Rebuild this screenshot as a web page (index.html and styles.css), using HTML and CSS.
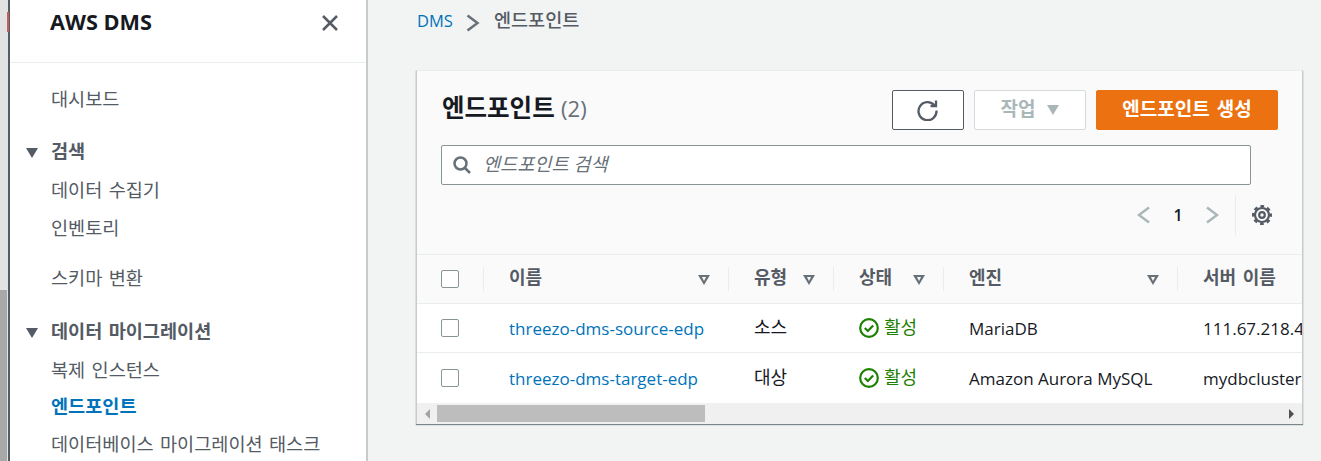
FILE: index.html
```html
<!DOCTYPE html>
<html lang="ko">
<head>
    <meta charset="UTF-8">
    <title>엔드포인트 - AWS DMS</title>
    <link rel="stylesheet" href="styles.css">
</head>
<body>
    <div class="edge"><div class="edge-mark"></div><div class="edge-thumb"></div></div>

    <nav class="side">
        <div class="side-head">
            <h2>AWS DMS</h2>
            <svg class="close" width="18" height="18" viewBox="0 0 18 18"><path d="M2 2l14 14M16 2L2 16"/></svg>
        </div>
        <div class="side-body">
            <a class="nav-link first">대시보드</a>
            <div class="nav-group"><span class="caret"></span>검색</div>
            <a class="nav-link">데이터 수집기</a>
            <a class="nav-link">인벤토리</a>
            <a class="nav-link solo">스키마 변환</a>
            <div class="nav-group"><span class="caret"></span>데이터 마이그레이션</div>
            <a class="nav-link">복제 인스턴스</a>
            <a class="nav-link active">엔드포인트</a>
            <a class="nav-link">데이터베이스 마이그레이션 태스크</a>
        </div>
    </nav>

    <main class="content">
        <div class="crumbs">
            <a>DMS</a>
            <svg width="14" height="18" viewBox="0 0 14 18"><path d="M1.500 1.500l10 7.500-10 7.500"/></svg>
            <span>엔드포인트</span>
        </div>

        <section class="panel">
            <div class="panel-head">
                <div class="title-row">
                    <h1>엔드포인트 <span class="count">(2)</span></h1>
                    <div class="actions">
                        <button class="btn refresh">
                            <svg width="22" height="22" viewBox="0 0 22 22"><path d="M17.500 6.500A9 9 0 1 0 19.500 11.500"/><path d="M19 1.500v5.500h-5.500"/></svg>
                        </button>
                        <button class="btn disabled"><span class="btn-text">작업</span><span class="btn-caret"></span></button>
                        <button class="btn primary"><span class="btn-text">엔드포인트 생성</span></button>
                    </div>
                </div>
                <div class="search">
                    <svg width="20" height="20" viewBox="0 0 20 20"><circle cx="8.500" cy="8.500" r="6"/><path d="M13 13l5 5"/></svg>
                    <span>엔드포인트 검색</span>
                </div>
                <div class="pager">
                    <svg class="pg" width="14" height="18" viewBox="0 0 14 18"><path d="M12 1.500L2 9l10 7.500"/></svg>
                    <b>1</b>
                    <svg class="pg" width="14" height="18" viewBox="0 0 14 18"><path d="M2 1.500L12 9 2 16.500"/></svg>
                    <div class="pager-sep">
                        <svg class="gear" width="22" height="22" viewBox="0 0 22 22">
                            <circle cx="11" cy="11" r="2.800"/>
                            <circle cx="11" cy="11" r="7"/>
                            <circle class="teeth" cx="11" cy="11" r="8.800"/>
                        </svg>
                    </div>
                </div>
            </div>

            <div class="table-wrap">
                <div class="row head">
                    <div class="cell c-check"><span class="check"></span></div>
                    <div class="cell c-name"><span class="th">이름</span><i class="sort"></i></div>
                    <div class="cell c-type"><span class="th">유형</span><i class="sort"></i></div>
                    <div class="cell c-state"><span class="th">상태</span><i class="sort"></i></div>
                    <div class="cell c-engine"><span class="th">엔진</span><i class="sort"></i></div>
                    <div class="cell c-server"><span class="th">서버 이름</span></div>
                </div>
                <div class="row">
                    <div class="cell c-check"><span class="check"></span></div>
                    <div class="cell c-name"><a>threezo-dms-source-edp</a></div>
                    <div class="cell c-type"><span class="ko">소스</span></div>
                    <div class="cell c-state ok">
                        <svg width="20" height="20" viewBox="0 0 20 20"><circle cx="10" cy="10" r="8.800"/><path d="M5.800 10l3 3 5.400-5.600"/></svg><span class="ko">활성</span>
                    </div>
                    <div class="cell c-engine">MariaDB</div>
                    <div class="cell c-server">111.67.218.4</div>
                </div>
                <div class="row last">
                    <div class="cell c-check"><span class="check"></span></div>
                    <div class="cell c-name"><a>threezo-dms-target-edp</a></div>
                    <div class="cell c-type"><span class="ko">대상</span></div>
                    <div class="cell c-state ok">
                        <svg width="20" height="20" viewBox="0 0 20 20"><circle cx="10" cy="10" r="8.800"/><path d="M5.800 10l3 3 5.400-5.600"/></svg><span class="ko">활성</span>
                    </div>
                    <div class="cell c-engine">Amazon Aurora MySQL</div>
                    <div class="cell c-server">mydbcluster-</div>
                </div>
            </div>

            <div class="hscroll">
                <span class="arrow left"></span>
                <div class="track"><div class="thumb"></div></div>
                <span class="arrow right"></span>
            </div>
        </section>
    </main>
</body>
</html>
```

FILE: styles.css
```css
* {
    box-sizing: border-box;
}
body {
    margin: 0;
    display: flex;
    height: 461px;
    overflow: hidden;
    background-color: #f2f3f3;
    color: #16191f;
    font-family: "Open Sans", "Noto Sans CJK KR", sans-serif;
    font-size: 17px;
}
a {
    color: #0073bb;
    text-decoration: none;
}

/* left window edge */
.edge {
    position: relative;
    width: 10px;
    flex: none;
    display: flex;
    flex-direction: column;
    justify-content: flex-end;
    background-color: #e2e2e2;
    border-right: 2px solid #545b64;
}
.edge-mark {
    position: absolute;
    left: 7px;
    top: 12px;
    width: 2px;
    height: 20px;
    background-color: #c0605a;
}
.edge-thumb {
    height: 171px;
    width: 7px;
    background-color: #a8a8a8;
}

.side {
    width: 358px;
    flex: none;
    background-color: #fff;
    border-right: 2px solid #c6cbce;
}
.side-head {
    height: 63px;
    padding: 0 27px 0 40px;
    display: flex;
    align-items: flex-start;
    justify-content: space-between;
    border-bottom: 1px solid #eaeded;
}
.side-head h2 {
    margin: 7px 0 0;
    font-size: 21.700px;
    line-height: 30px;
    font-weight: 700;
}
.close {
    margin-top: 14px;
    fill: none;
    stroke: #545b64;
    stroke-width: 2.500;
}
.side-body {
    display: flex;
    flex-direction: column;
    padding-left: 41px;
    word-spacing: 1.500px;
}
.nav-link {
    color: #545b64;
    font-size: 18.600px;
    line-height: 38px;
    height: 38px;
}
.nav-link.first {
    margin-top: 17px;
    margin-bottom: 14px;
}
.nav-link.solo {
    margin-top: 12px;
    margin-bottom: 15px;
}
.nav-link.active {
    margin-top: -2px;
    color: #0073bb;
    font-weight: 700;
}
.nav-group {
    position: relative;
    color: #545b64;
    font-size: 18.600px;
    font-weight: 700;
    line-height: 38px;
    height: 38px;
    margin-bottom: 1px;
}
.caret {
    position: absolute;
    left: -25px;
    top: 16px;
    border-left: 6px solid transparent;
    border-right: 6px solid transparent;
    border-top: 10px solid #545b64;
}

.content {
    flex: 1;
    min-width: 0;
    padding: 0 18px 0 48px;
}
.crumbs {
    height: 70px;
    padding: 6px 0 0 1px;
    display: flex;
    align-items: flex-start;
    line-height: 30px;
    font-size: 16.500px;
}
.crumbs svg {
    margin: 8px 14px 0 13px;
    fill: none;
    stroke: #687078;
    stroke-width: 2.500;
}
.crumbs span {
    color: #545b64;
    font-size: 18.600px;
    font-weight: 500;
    line-height: 28px;
}

.panel {
    background-color: #fff;
    border-top: 1px solid #eaeded;
    border-left: 1px solid #c6cbce;
    border-right: 1px solid #c6cbce;
    box-shadow: 0 1px 1px 0 rgba(0, 28, 36, .5);
}
.panel-head {
    height: 184px;
    padding: 19px 24px 0;
    background-color: #fafafa;
    border-bottom: 1px solid #eaeded;
}
.title-row {
    display: flex;
    justify-content: space-between;
    height: 55px;
}
.panel-head h1 {
    margin: 0 0 0 1px;
    font-size: 24.500px;
    line-height: 36px;
    font-weight: 700;
}
.count {
    color: #687078;
    font-size: 22px;
    font-weight: 400;
}
.actions {
    display: flex;
    gap: 10px;
}
.btn {
    height: 40px;
    border-radius: 2px;
    font-family: inherit;
    font-size: 19px;
    font-weight: 700;
    word-spacing: 2px;
    background-color: #fff;
    padding: 0;
    display: flex;
    align-items: center;
    justify-content: center;
}
.btn-text {
    margin-top: -5px;
}
.refresh {
    width: 72px;
    border: 1px solid #545b64;
}
.refresh svg {
    fill: none;
    stroke: #545b64;
    stroke-width: 2.300;
}
.disabled {
    width: 112px;
    border: 1px solid #d5dbdb;
    color: #aab7b8;
}
.btn-caret {
    margin-left: 12px;
    border-left: 6px solid transparent;
    border-right: 6px solid transparent;
    border-top: 10px solid #aab7b8;
}
.primary {
    width: 182px;
    border: 1px solid #ec7211;
    background-color: #ec7211;
    color: #fff;
}
.search {
    width: 810px;
    height: 40px;
    padding-left: 10px;
    display: flex;
    align-items: center;
    gap: 11px;
    background-color: #fff;
    border: 1px solid #879596;
    border-radius: 2px;
    color: #687078;
    font-style: italic;
    font-size: 18.600px;
}
.search span {
    margin-top: -6px;
}
.search svg {
    fill: none;
    stroke: #687078;
    stroke-width: 2.500;
}
.pager {
    margin: 10px 5px 0 0;
    display: flex;
    justify-content: flex-end;
    align-items: center;
    height: 40px;
}
.pg {
    fill: none;
    stroke: #aab7b8;
    stroke-width: 2.500;
}
.pager b {
    font-size: 16px;
    font-weight: 600;
    width: 54px;
    text-align: center;
}
.pager-sep {
    margin-left: 16px;
    padding-left: 15px;
    height: 40px;
    display: flex;
    align-items: center;
    border-left: 1px solid #eaeded;
}
.gear {
    fill: none;
    stroke: #545b64;
    stroke-width: 2.200;
}
.gear .teeth {
    stroke-width: 2.400;
    stroke-dasharray: 3.700 3.210;
    stroke-dashoffset: 1.850;
}

.table-wrap {
    overflow: hidden;
}
.row {
    display: flex;
    height: 49px;
    background-color: #fff;
    border-bottom: 1px solid #eaeded;
    white-space: nowrap;
}
.row.last {
    height: 50px;
    border-bottom: none;
}
.row.head {
    background-color: #fafafa;
    color: #545b64;
}
.th {
    font-size: 18px;
    font-weight: 700;
    word-spacing: 2px;
    margin-top: -6px;
}
.ko {
    font-size: 18px;
    margin-top: -5px;
}
.cell {
    flex: none;
    display: flex;
    align-items: center;
    padding-left: 26px;
    position: relative;
}
.row.head .cell::before {
    content: "";
    position: absolute;
    left: 0;
    top: 12px;
    height: 24px;
    border-left: 1px solid #eaeded;
}
.row.head .c-check::before {
    display: none;
}
.c-check { width: 66px; padding-left: 24px; }
.c-name { width: 245px; }
.c-type { width: 105px; }
.c-state { width: 110px; }
.c-engine { width: 234px; }
.c-server { width: 160px; }
.sort {
    position: absolute;
    right: 18px;
    top: 20px;
    width: 0;
    height: 0;
    border-left: 6px solid transparent;
    border-right: 6px solid transparent;
    border-top: 10px solid #687078;
}
.sort::after {
    content: "";
    position: absolute;
    left: -2px;
    top: -8px;
    border-left: 2px solid transparent;
    border-right: 2px solid transparent;
    border-top: 4px solid #fafafa;
}
.check {
    width: 18px;
    height: 18px;
    background-color: #fff;
    border: 1px solid #879596;
    border-radius: 2px;
}
.ok {
    color: #1d8102;
    gap: 5px;
}
.ok svg {
    fill: none;
    stroke: #1d8102;
    stroke-width: 2.200;
}

.hscroll {
    height: 21px;
    display: flex;
    align-items: center;
    background-color: #f0f0f0;
}
.track {
    flex: 1;
    height: 17px;
}
.thumb {
    width: 268px;
    height: 17px;
    background-color: #bdbdbd;
}
.arrow {
    flex: none;
    width: 21px;
    display: flex;
    justify-content: center;
}
.arrow.left {
    width: 20px;
}
.arrow.left::before {
    content: "";
    border-top: 5px solid transparent;
    border-bottom: 5px solid transparent;
    border-right: 5px solid #a3a3a3;
}
.arrow.right::before {
    content: "";
    border-top: 5px solid transparent;
    border-bottom: 5px solid transparent;
    border-left: 5px solid #505050;
}
```
